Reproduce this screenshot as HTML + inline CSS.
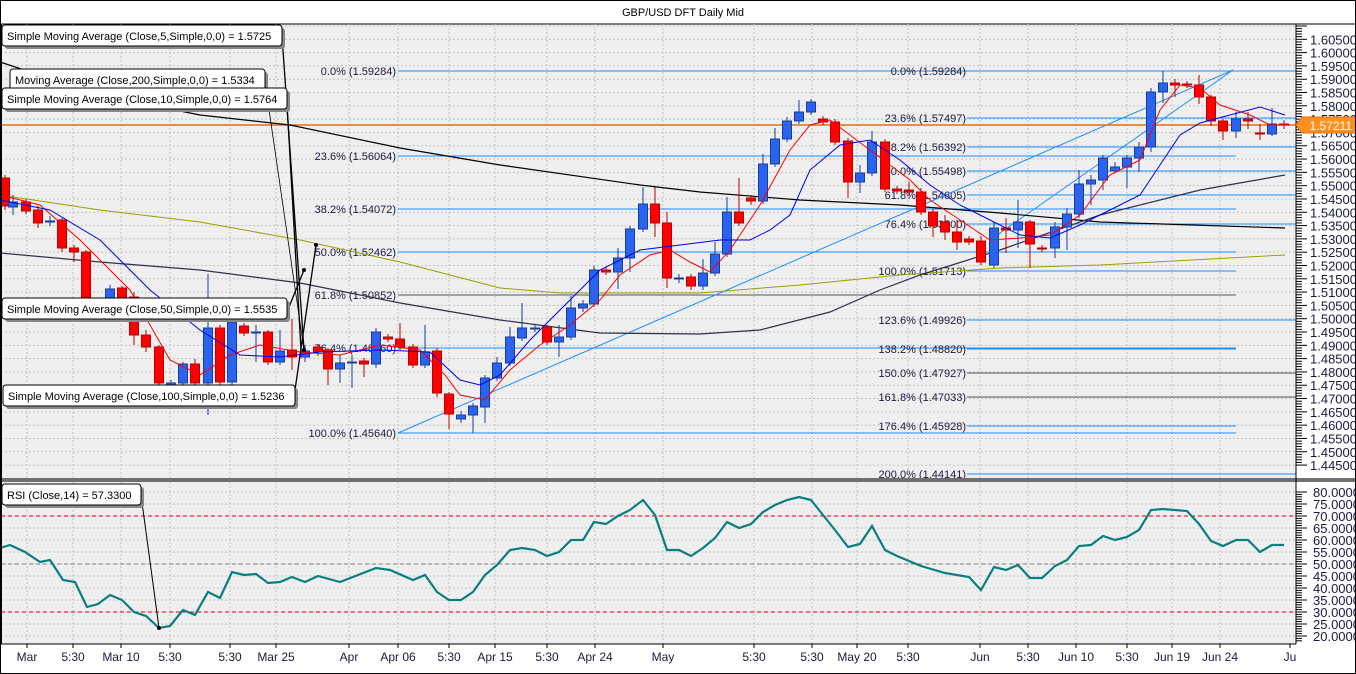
<!DOCTYPE html>
<html><head><meta charset="utf-8"><style>
body{margin:0;background:#fff;width:1356px;height:674px;overflow:hidden;font-family:"Liberation Sans",sans-serif}
svg{display:block}
</style></head><body>
<svg id="s" width="1356" height="674" xmlns="http://www.w3.org/2000/svg" font-family="Liberation Sans, sans-serif"></svg>
<script>
var s=document.getElementById('s');var h='';
function L(x1,y1,x2,y2,c,w,d){h+='<line x1="'+x1+'" y1="'+y1+'" x2="'+x2+'" y2="'+y2+'" stroke="'+c+'" stroke-width="'+(w||1)+'"'+(d?' stroke-dasharray="'+d+'"':'')+'/>';}
function T(x,y,t,sz,c,a){h+='<text x="'+x+'" y="'+y+'" font-size="'+(sz||11)+'" fill="'+(c||'#000')+'"'+(a?' text-anchor="'+a+'"':'')+'>'+t+'</text>';}
function P(pts,c,w){var a=[];for(var i=0;i<pts.length;i+=2)a.push(pts[i]+','+pts[i+1]);h+='<polyline points="'+a.join(' ')+'" fill="none" stroke="'+c+'" stroke-width="'+(w||1)+'"/>';}
h+='<rect x="0" y="0" width="1356" height="674" fill="#fff"/>';
h+='<rect x="1" y="24" width="1295" height="455" fill="#efefef"/>';
h+='<rect x="1" y="482" width="1295" height="162" fill="#efefef"/>';
T(683,16,'GBP/USD DFT Daily Mid',11,'#000','middle');
L(0,24,1356,24,'#000',1);
var xs=[27,73,121,170,230,276,349,398,449,495,547,595,663,754,812,857,908,980,1028,1076,1127,1172,1220,1290];
var lb=['Mar','5:30','Mar 10','5:30','5:30','Mar 25','Apr','Apr 06','5:30','Apr 15','5:30','Apr 24','May','5:30','5:30','May 20','5:30','Jun','5:30','Jun 10','5:30','Jun 19','Jun 24','Ju'];
for(var i=0;i<xs.length-1;i++){L(xs[i],24,xs[i],479,'#c4c4c4',1,'2,2');L(xs[i],482,xs[i],644,'#c4c4c4',1,'2,2');}
function py(p){return 26+(1.61-p)*2661;}
for(var p=1.61;p>1.440;p-=0.005){var y=py(p);if(y>25&&y<478)L(1,y,1296,y,'#c4c4c4',1,'2,2');}
for(var v=80;v>=20;v-=5){var y=492+(80-v)*2.4;L(1,y,1296,y,'#c4c4c4',1,'2,2');}
L(1,516,1296,516,'#e00000',1,'4,3');L(1,564,1296,564,'#808080',1,'4,3');L(1,612,1296,612,'#e00000',1,'4,3');
var fb='#1e8fff';
[[71,1296],[156,1236],[209,1236],[252,1236],[295,1236],[348,1236],[433,1236]].forEach(function(a){L(398,a[0],a[1],a[0],a[0]==295?'#555':fb,1);});
[[71,1296],[118,1296],[147,1296],[171,1296],[195,1296],[224,1296],[271,1236],[320,1296],[349,1236],[373,1296],[397,1296],[426,1236],[474,1296]].forEach(function(a){var c=(a[0]==373||a[0]==397)?'#555':fb;L(967,a[0],a[1],a[0],c,1);});
var fl=[[71,'0.0% (1.59284)'],[156,'23.6% (1.56064)'],[209,'38.2% (1.54072)'],[252,'50.0% (1.52462)'],[295,'61.8% (1.50852)'],[348,'76.4% (1.48860)'],[433,'100.0% (1.45640)']];
fl.forEach(function(a){T(396,a[0]+4,a[1],11,'#1a1a40','end');});
var fr=[[71,'0.0% (1.59284)'],[118,'23.6% (1.57497)'],[147,'38.2% (1.56392)'],[171,'50.0% (1.55498)'],[195,'61.8% (1.54605)'],[224,'76.4% (1.53500)'],[271,'100.0% (1.51713)'],[320,'123.6% (1.49926)'],[349,'138.2% (1.48820)'],[373,'150.0% (1.47927)'],[397,'161.8% (1.47033)'],[426,'176.4% (1.45928)'],[474,'200.0% (1.44141)']];
fr.forEach(function(a){T(966,a[0]+4,a[1],11,'#1a1a40','end');});
L(398,433,1233,70,'#1e8fff',1);L(990,240,1233,70,'#1e8fff',1);
L(1,125,1296,125,'#e07010',1.5);
P([0,195,100,210,200,222,300,240,400,262,500,288,560,293,700,293,800,285,900,275,1000,268,1100,265,1285,255],'#9aa000',1);
P([0,62,100,95,200,115,290,125,400,148,500,165,640,185,700,192,800,200,900,205,1000,213,1100,222,1285,228],'#000',1.2);
P([0,253,100,262,200,270,300,283,400,303,500,320,600,333,700,334,760,330,830,312,880,290,920,275,1000,250,1100,215,1200,190,1285,175],'#303048',1.2);
var C=[[5,178,206,175,210],[13,207,202,195,215],[26,202,211,199,214],[38,210,223,206,228],[50,222,221,216,226],[62,220,248,218,252],[74,248,252,245,262],[86,252,298,250,302],[110,300,289,285,310],[122,288,300,286,306],[134,297,335,292,345],[146,335,347,330,352],[159,347,383,345,386],[171,385,383,380,388],[183,383,364,362,388],[195,364,383,359,388],[208,383,328,274,415],[220,328,382,325,386],[232,382,322,318,386],[244,326,333,323,336],[256,333,332,325,362],[268,332,362,330,365],[280,362,351,330,365],[292,350,357,319,370],[305,357,351,345,362],[318,347,352,344,356],[328,350,369,348,385],[340,369,363,355,383],[352,363,362,355,388],[364,361,364,358,377],[376,364,332,328,368],[388,337,339,334,342],[400,339,347,323,350],[413,347,365,344,368],[425,365,352,325,368],[437,351,393,348,397],[449,394,414,392,429],[461,419,415,411,423],[473,415,406,403,433],[485,407,378,375,423],[497,378,363,357,381],[510,363,337,327,366],[522,338,328,303,341],[535,329,328,325,332],[547,327,342,325,345],[559,342,337,325,357],[571,337,308,296,340],[583,308,304,300,312],[594,304,270,266,307],[606,270,272,267,275],[618,272,258,248,289],[630,258,229,226,272],[643,229,204,187,232],[655,204,223,187,237],[667,223,278,212,288],[679,279,278,274,283],[691,277,286,274,290],[703,286,273,259,290],[715,273,254,242,276],[727,254,212,197,257],[739,212,223,178,226],[751,198,201,195,205],[763,201,164,154,204],[775,164,139,128,167],[787,139,121,117,142],[799,121,112,100,124],[811,112,102,99,115],[823,119,122,116,125],[835,122,142,119,145],[848,141,182,138,198],[860,182,173,165,193],[872,173,142,131,176],[885,142,189,139,192],[897,189,191,186,194],[909,190,192,182,196],[921,192,212,188,215],[933,212,226,209,237],[945,222,232,215,240],[957,232,242,220,250],[969,239,242,236,245],[981,241,262,236,265],[994,265,228,222,268],[1006,228,230,218,253],[1018,230,222,200,248],[1030,222,244,220,268],[1042,248,248,245,252],[1055,248,227,222,258],[1067,227,214,208,250],[1079,214,184,170,218],[1091,184,180,175,205],[1103,180,158,155,190],[1115,171,167,162,173],[1127,167,158,155,188],[1139,158,147,142,172],[1151,147,92,88,152],[1163,92,83,71,103],[1175,83,85,79,97],[1187,84,85,81,88],[1199,85,97,75,104],[1211,97,121,95,126],[1223,121,131,119,140],[1236,131,119,112,138],[1248,119,121,112,129],[1260,133,134,124,140],[1272,134,124,108,136],[1284,124,125,120,129]];
C.forEach(function(c){var up=c[2]<c[1];var fill=up?'#2a63f0':'#ff0000',st=up?'#1a3d9a':'#b80000';L(c[0],c[3],c[0],c[4],st,1);var t=Math.min(c[1],c[2]),b=Math.max(c[1],c[2]);if(b-t<2){L(c[0]-5,t+0.5,c[0]+5,t+0.5,st,2);}else h+='<rect x="'+(c[0]-4.5)+'" y="'+t+'" width="9" height="'+(b-t)+'" fill="'+fill+'" stroke="'+st+'" stroke-width="1"/>';});
P([0,195,40,205,80,240,130,290,170,360,200,375,230,355,260,345,300,352,340,355,380,345,420,350,445,375,460,395,485,400,510,370,540,345,570,325,600,300,620,275,650,255,670,250,690,262,710,272,730,250,760,205,790,150,810,125,830,120,850,135,870,150,890,165,910,180,930,200,960,220,990,240,1020,238,1050,235,1080,215,1110,175,1140,160,1160,110,1180,85,1200,88,1220,105,1250,115,1270,125,1290,125],'#ff0000',1);
P([0,200,50,210,100,240,150,290,200,330,240,355,280,357,320,352,380,350,430,352,460,380,480,385,500,375,530,340,560,310,600,270,640,250,680,245,720,240,750,240,770,230,790,215,810,170,840,145,870,140,900,160,930,185,960,205,990,220,1020,235,1050,238,1080,225,1110,210,1140,195,1160,165,1180,135,1200,123,1230,115,1260,107,1285,115],'#0000ee',1);
L(282,36,304,350,'#000',1.3);L(287,104,301,350,'#000',1.3);L(287,312,304,270,'#000',1.3);L(295,390,316,245,'#000',1.3);L(265,82,304,350,'#000',0.8);
h+='<circle cx="304" cy="350" r="2" fill="#000"/><circle cx="316" cy="245" r="2" fill="#000"/><circle cx="304" cy="270" r="2" fill="#000"/>';
function B(x,y,w,t){h+='<rect x="'+(x+3)+'" y="'+(y+3)+'" width="'+w+'" height="21" rx="3" fill="#888"/>';h+='<rect x="'+x+'" y="'+y+'" width="'+w+'" height="21" rx="3" fill="#fff" stroke="#000"/>';T(x+5,y+15,t,11,'#000');}
B(2,25,280,'Simple Moving Average (Close,5,Simple,0,0) = 1.5725');
B(10,69,255,'Moving Average (Close,200,Simple,0,0) = 1.5334');
B(2,88,285,'Simple Moving Average (Close,10,Simple,0,0) = 1.5764');
B(2,298,285,'Simple Moving Average (Close,50,Simple,0,0) = 1.5535');
B(3,385,292,'Simple Moving Average (Close,100,Simple,0,0) = 1.5236');
P([0,548,10,545,25,552,40,562,50,560,63,580,75,582,87,607,98,604,110,595,122,600,134,612,146,616,159,628,170,626,183,610,195,615,208,592,220,598,232,572,244,575,256,574,268,583,280,582,292,577,305,582,318,576,340,582,376,568,390,570,413,580,425,575,437,592,449,600,461,600,473,592,485,575,497,565,510,550,522,548,535,550,547,556,559,552,571,540,583,540,594,522,606,524,618,516,630,510,643,500,655,515,667,550,679,550,691,556,703,548,715,538,727,522,739,528,751,524,763,512,775,505,787,500,799,497,811,500,823,515,835,530,848,547,860,544,872,526,885,550,897,556,921,566,945,573,969,577,981,590,994,567,1006,570,1018,565,1030,578,1042,578,1055,566,1067,560,1079,546,1091,545,1103,536,1115,540,1127,537,1139,530,1151,510,1163,509,1187,511,1199,524,1211,541,1223,546,1236,540,1248,540,1260,552,1272,545,1284,545],'#0a7f7f',2.2);
L(141,495,159,628,'#000',1);h+='<circle cx="159" cy="628" r="2" fill="#000"/>';
B(2,484,139,'RSI (Close,14) = 57.3300');
h+='<rect x="0" y="478" width="1356" height="4" fill="#707070"/>';
h+='<rect x="1297" y="25" width="59" height="453" fill="#fff"/>';
h+='<rect x="1297" y="482" width="59" height="162" fill="#fff"/>';
L(1296,24,1296,644,'#000',1);
for(var k=0;k<=165;k++){var p=1.61-k*0.001,y=py(p);if(y<25||y>478)continue;L(1296,y,k%5==0?1307:1302,y,'#000',1);}
for(var k=0;k<=33;k++){var p=1.61-k*0.005;var y=py(p);if(y<28||y>476)continue;T(1310,y+5,p.toFixed(5),13,'#1a1a40');}
for(var v=80;v>=18;v--){var y=492+(80-v)*2.4;if(y>644)break;L(1296,y,v%5==0?1307:1302,y,'#000',1);}
for(var v=80;v>=20;v-=5){var y=492+(80-v)*2.4;T(1313,y+5,v.toFixed(5),13,'#1a1a40');}
h+='<path d="M1296,125 L1302,117 L1356,117 L1356,133 L1302,133 Z" fill="#ff9020" stroke="#e07010"/>';T(1352,130,'1.57211',12,'#fff','end');
L(0,644,1296,644,'#000',1);
for(var i=0;i<xs.length;i++){L(xs[i],644,xs[i],648,'#000',1);T(xs[i],661,lb[i],12,'#1a1a40','middle');}
L(1,24,1,644,'#000',2);
h+='<rect x="0.5" y="0.5" width="1355" height="673" fill="none" stroke="#000"/>';
s.innerHTML=h;
</script>
</body></html>
